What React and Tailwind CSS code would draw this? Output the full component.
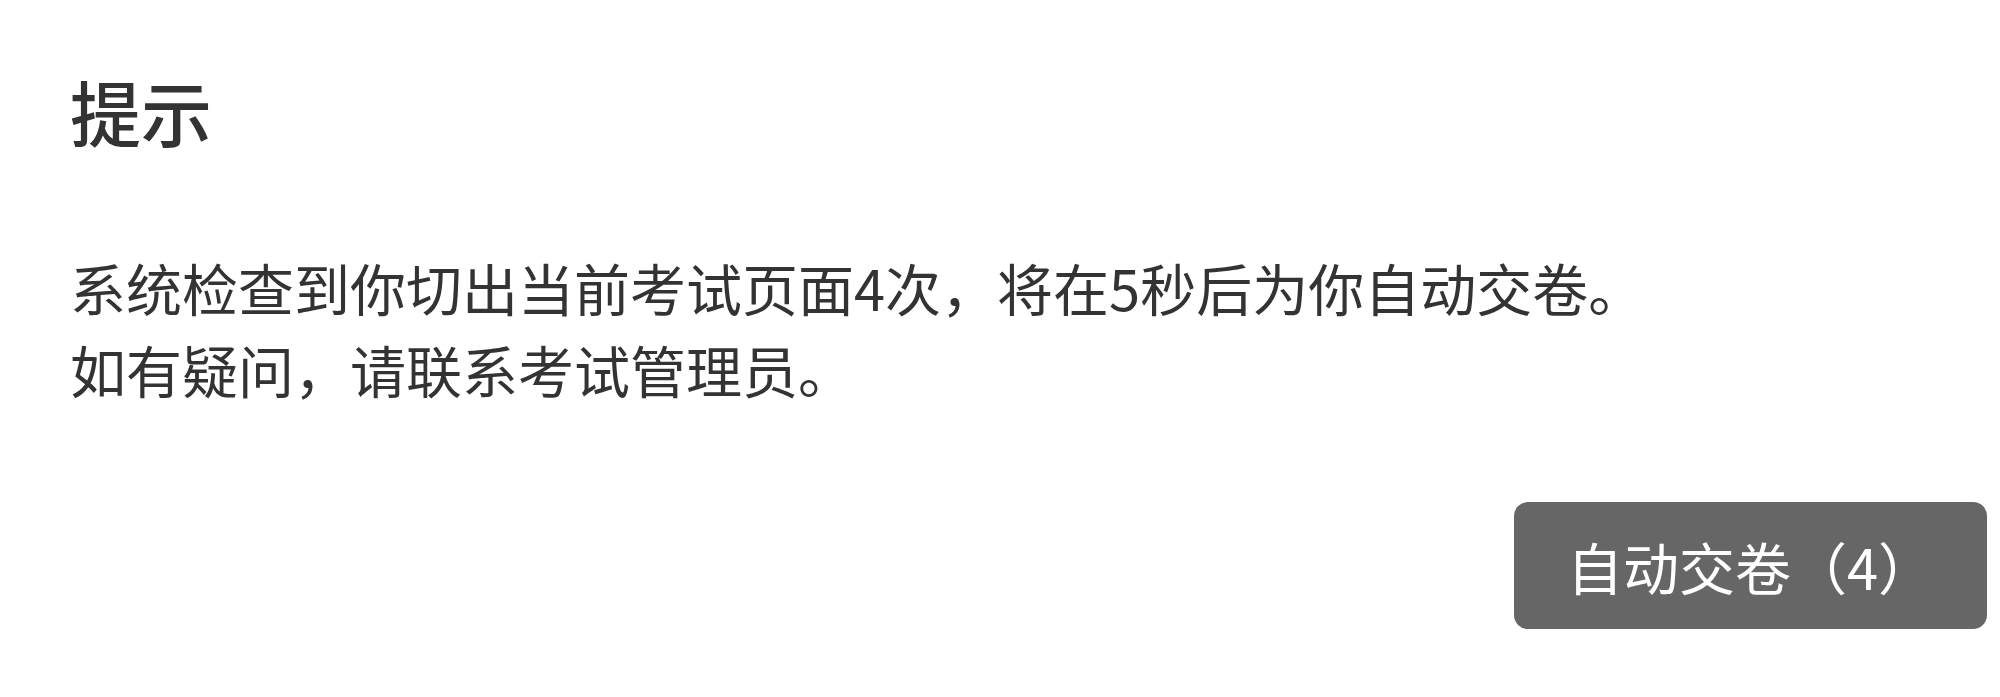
import React from 'react';

const App = () => {
  const countdown = 4;

  return (
    <div
      className="w-[2000px] h-[697px] bg-white text-[#333333] overflow-hidden"
      style={{ fontFamily: '"Noto Sans CJK SC", "Noto Sans", sans-serif' }}
    >
      {/* 标题 */}
      <div className="pl-[70px] pt-[70px]">
        <h1 className="text-[71px] leading-[80px] font-medium">提示</h1>
      </div>

      {/* 内容 */}
      <div className="pl-[70px] pt-[96px]">
        <p className="text-[56px] leading-[82px]">
          系统检查到你切出当前考试页面4次，将在5秒后为你自动交卷。
        </p>
        <p className="text-[56px] leading-[82px]">如有疑问，请联系考试管理员。</p>
      </div>

      {/* 按钮 */}
      <div className="flex justify-end pr-[13px] pt-[92px]">
        <button className="h-[127px] w-[473px] flex items-center justify-center bg-[#666666] text-white rounded-[14px] text-[56px] leading-none">
          自动交卷（{countdown}）
        </button>
      </div>
    </div>
  );
};

export default App;
